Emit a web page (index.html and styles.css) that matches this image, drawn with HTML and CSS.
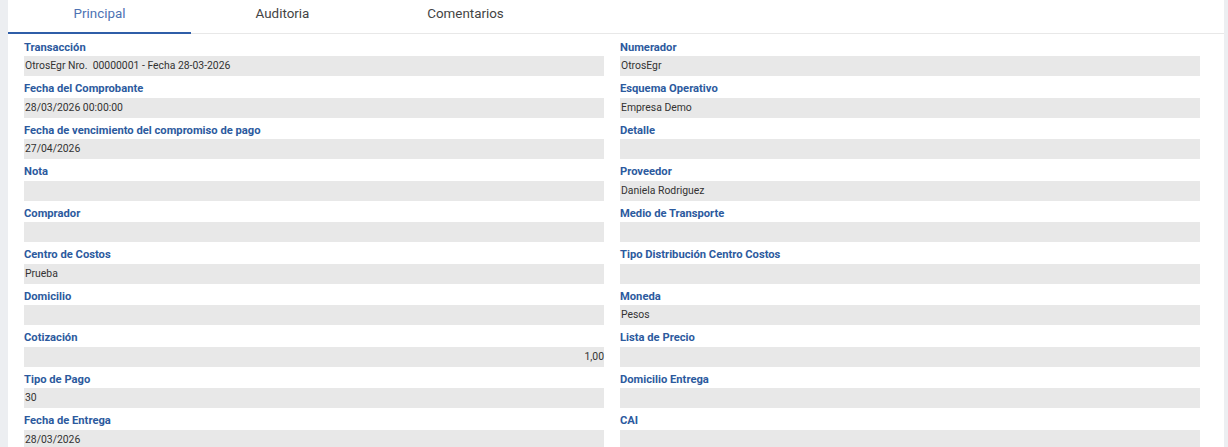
FILE: index.html
```html
<!DOCTYPE html>
<html lang="es">
<head>
<meta charset="utf-8">
<title>Comprobante</title>
<link rel="stylesheet" href="styles.css">
</head>
<body>
<div class="panel">
  <div class="tabs">
    <div class="tab active">Principal</div>
    <div class="tab">Auditoria</div>
    <div class="tab">Comentarios</div>
  </div>
  <div class="form">
    <div class="col">
      <div class="field"><div class="label">Transacción</div><div class="value">OtrosEgr Nro.  00000001 - Fecha 28-03-2026</div></div>
      <div class="field"><div class="label">Fecha del Comprobante</div><div class="value">28/03/2026 00:00:00</div></div>
      <div class="field"><div class="label">Fecha de vencimiento del compromiso de pago</div><div class="value">27/04/2026</div></div>
      <div class="field"><div class="label">Nota</div><div class="value"></div></div>
      <div class="field"><div class="label">Comprador</div><div class="value"></div></div>
      <div class="field"><div class="label">Centro de Costos</div><div class="value">Prueba</div></div>
      <div class="field"><div class="label">Domicilio</div><div class="value"></div></div>
      <div class="field"><div class="label">Cotización</div><div class="value num">1,00</div></div>
      <div class="field"><div class="label">Tipo de Pago</div><div class="value">30</div></div>
      <div class="field"><div class="label">Fecha de Entrega</div><div class="value">28/03/2026</div></div>
    </div>
    <div class="col">
      <div class="field"><div class="label">Numerador</div><div class="value">OtrosEgr</div></div>
      <div class="field"><div class="label">Esquema Operativo</div><div class="value">Empresa Demo</div></div>
      <div class="field"><div class="label">Detalle</div><div class="value"></div></div>
      <div class="field"><div class="label">Proveedor</div><div class="value">Daniela Rodriguez</div></div>
      <div class="field"><div class="label">Medio de Transporte</div><div class="value"></div></div>
      <div class="field"><div class="label">Tipo Distribución Centro Costos</div><div class="value"></div></div>
      <div class="field"><div class="label">Moneda</div><div class="value">Pesos</div></div>
      <div class="field"><div class="label">Lista de Precio</div><div class="value"></div></div>
      <div class="field"><div class="label">Domicilio Entrega</div><div class="value"></div></div>
      <div class="field"><div class="label">CAI</div><div class="value"></div></div>
    </div>
  </div>
</div>
</body>
</html>
```
FILE: styles.css
```css
html, body {
  margin: 0;
  padding: 0;
  height: 100%;
  overflow: hidden;
}
body {
  background: #eceef1;
  font-family: Roboto, "Liberation Sans", Arial, sans-serif;
  padding: 0 4px 0 8px;
}
.panel {
  background: #ffffff;
  height: 100%;
}
.tabs {
  display: flex;
  height: 33px;
  border-bottom: 1px solid #e8e8e8;
}
.tab {
  width: 183px;
  display: flex;
  align-items: center;
  justify-content: center;
  font-size: 13.4px;
  color: #444444;
  padding-bottom: 7px;
  box-sizing: border-box;
}
.tab.active {
  color: #4d72b3;
  box-shadow: inset 0 -1px 0 #2f5ea8;
  height: 34px;
  margin-bottom: -1px;
  border-bottom: 1px solid #2f5ea8;
}
.form {
  display: grid;
  grid-template-columns: 1fr 1fr;
  column-gap: 16px;
  padding: 2.5px 24px 0 16px;
}
.field {
  padding-bottom: 2px;
}
.label {
  font-size: 11.2px;
  font-weight: 700;
  color: #2c5a9e;
  line-height: 16.5px;
  padding-top: 3px;
  white-space: nowrap;
}
.value {
  height: 20px;
  background: #e8e8e8;
  font-size: 10.4px;
  line-height: 20px;
  color: #333333;
  padding-left: 1px;
  white-space: pre;
}
.value.num {
  text-align: right;
  padding-left: 0;
}
```
